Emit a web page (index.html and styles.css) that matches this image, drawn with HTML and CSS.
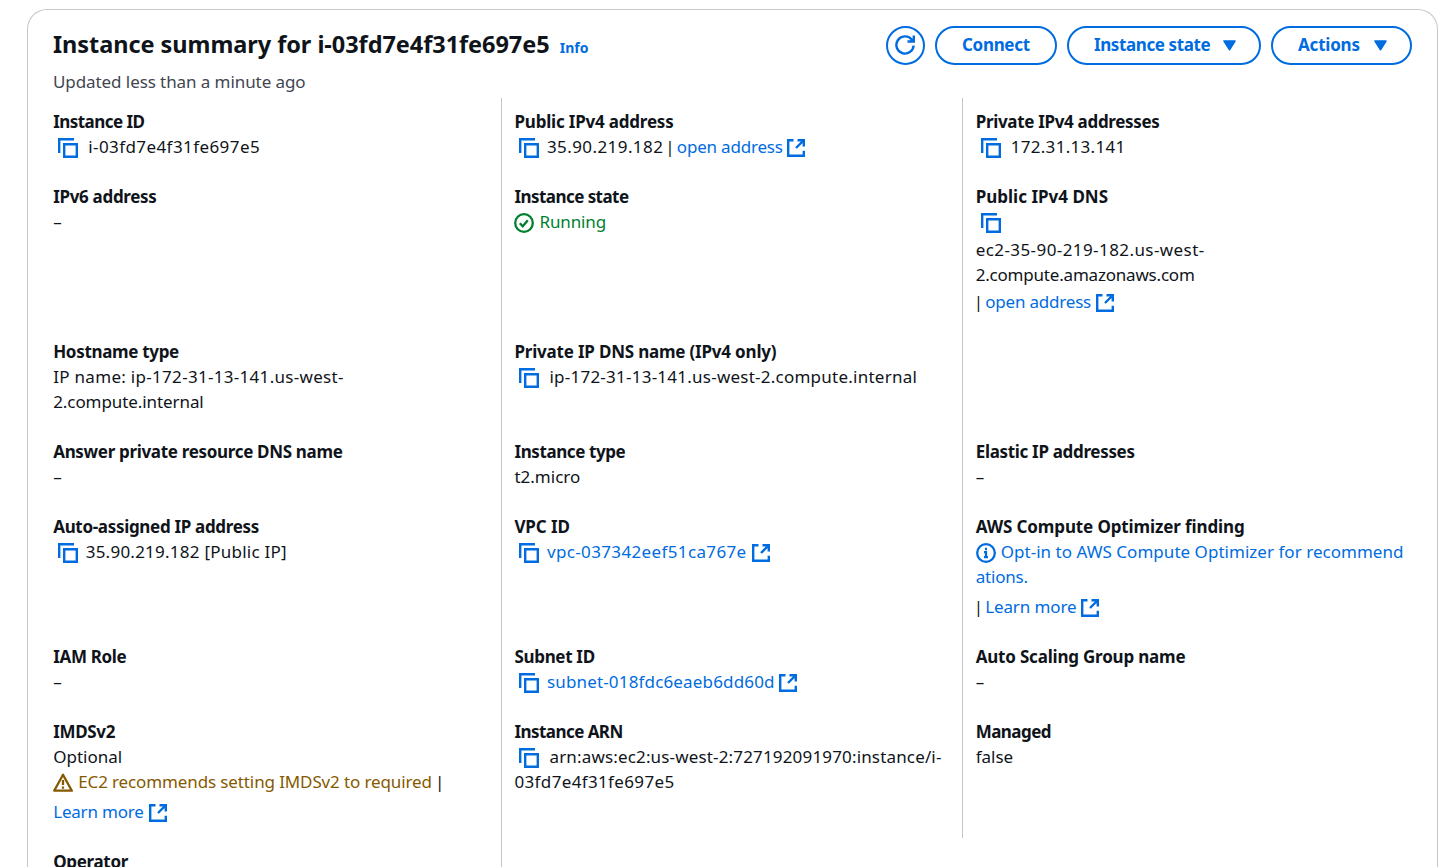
FILE: index.html
```
<!DOCTYPE html>
<html lang="en">
<head>
<meta charset="utf-8">
<title>Instance summary</title>
<link rel="stylesheet" href="styles.css">
</head>
<body>
<svg class="defs" width="0" height="0" aria-hidden="true">
  <symbol id="copy" viewBox="0 0 20 20"><path d="M1.200 15V1.200h14.800" /><path d="M6.200 6.200h12.600v12.600H6.200z"/></symbol>
  <symbol id="ext" viewBox="1 1 18 18"><path d="M7.500 2.200H2.200v15.600h15.600v-5M11.500 2.200h6.300v6.300M17.500 2.500 10 10"/></symbol>
  <symbol id="ok" viewBox="0 0 20 20"><circle cx="10" cy="10" r="8.8"/><path d="m5.800 10.200 3 3 5-6"/></symbol>
  <symbol id="info" viewBox="0 0 20 20"><circle cx="10" cy="10" r="8.8"/><path d="M8 9.200h2v5M8 14.200h4M9 6h2"/></symbol>
  <symbol id="warn" viewBox="0 0 20 20"><path d="M10 1.800 18.800 17.700H1.200z" stroke-linejoin="round"/><path d="M10 7v5M10 13.500v2.200"/></symbol>
  <symbol id="refresh" viewBox="0 0 20 20"><path d="M18.600 10.500a8.600 8.600 0 1 1-2.200-6.300L18.500 6.500M12.500 6.500h6.300V.5"/></symbol>
  <symbol id="caret" viewBox="0 0 13 11"><path d="M1 1h11L6.500 9.800z"/></symbol>
</svg>

<main class="card">
  <header class="header">
    <div>
      <h1 class="title">Instance summary for i-03fd7e4f31fe697e5 <a class="info-link">Info</a></h1>
      <p class="updated">Updated less than a minute ago</p>
    </div>
    <div class="actions">
      <button class="btn round" aria-label="Refresh"><svg><use href="#refresh"/></svg></button>
      <button class="btn connect m3">Connect</button>
      <button class="btn state"><span class="m4">Instance state</span><svg><use href="#caret"/></svg></button>
      <button class="btn menu"><span class="m2">Actions</span><svg><use href="#caret"/></svg></button>
    </div>
  </header>

  <div class="grid">
    <section class="cell"><h2 class="m5">Instance ID</h2>
      <div class="line"><svg class="copy"><use href="#copy"/></svg><span class="p4 wide">i-03fd7e4f31fe697e5</span></div></section>
    <section class="cell"><h2 class="m2">Public IPv4 address</h2>
      <div class="line"><svg class="copy"><use href="#copy"/></svg><span class="p4">35.90.219.182</span><span class="bar mid">|</span><a class="m2">open address</a><svg class="ext near"><use href="#ext"/></svg></div></section>
    <section class="cell"><h2 class="m3">Private IPv4 addresses</h2>
      <div class="line"><svg class="copy"><use href="#copy"/></svg><span class="p3 wide">172.31.13.141</span></div></section>

    <section class="cell"><h2 class="m3">IPv6 address</h2><div class="line dash">–</div></section>
    <section class="cell"><h2 class="m5">Instance state</h2>
      <div class="line ok"><svg class="status"><use href="#ok"/></svg><span class="m1">Running</span></div></section>
    <section class="cell"><h2>Public IPv4 DNS</h2>
      <div class="line tall"><svg class="copy"><use href="#copy"/></svg></div>
      <div class="line p4">ec2-35-90-219-182.us-west-</div>
      <div class="line m2">2.compute.amazonaws.com</div>
      <div class="line drop"><span class="bar">|</span><a class="m2">open address</a><svg class="ext"><use href="#ext"/></svg></div></section>

    <section class="cell"><h2 class="m3">Hostname type</h2>
      <div class="line p3">IP name: ip-172-31-13-141.us-west-</div><div class="line m05">2.compute.internal</div></section>
    <section class="cell"><h2 class="m2">Private IP DNS name (IPv4 only)</h2>
      <div class="line"><svg class="copy"><use href="#copy"/></svg><span class="p2 wide">ip-172-31-13-141.us-west-2.compute.internal</span></div></section>
    <section class="cell"></section>

    <section class="cell"><h2 class="m3">Answer private resource DNS name</h2><div class="line dash">–</div></section>
    <section class="cell"><h2 class="m4">Instance type</h2><div class="line">t2.micro</div></section>
    <section class="cell"><h2 class="m3">Elastic IP addresses</h2><div class="line dash">–</div></section>

    <section class="cell"><h2 class="m3">Auto-assigned IP address</h2>
      <div class="line"><svg class="copy"><use href="#copy"/></svg><span class="p2">35.90.219.182 [Public IP]</span></div></section>
    <section class="cell"><h2 class="m1">VPC ID</h2>
      <div class="line"><svg class="copy"><use href="#copy"/></svg><a class="p35">vpc-037342eef51ca767e</a><svg class="ext"><use href="#ext"/></svg></div></section>
    <section class="cell"><h2 class="m1">AWS Compute Optimizer finding</h2>
      <div class="line link opt"><svg class="status"><use href="#info"/></svg>Opt-in to AWS Compute Optimizer for recommend</div>
      <div class="line link m2">ations.</div>
      <div class="line drop-lg"><span class="bar">|</span><a class="m1">Learn more</a><svg class="ext"><use href="#ext"/></svg></div></section>

    <section class="cell"><h2 class="m3">IAM Role</h2><div class="line dash">–</div></section>
    <section class="cell"><h2 class="m3">Subnet ID</h2>
      <div class="line"><svg class="copy"><use href="#copy"/></svg><a class="p15">subnet-018fdc6eaeb6dd60d</a><svg class="ext near"><use href="#ext"/></svg></div></section>
    <section class="cell"><h2 class="m2">Auto Scaling Group name</h2><div class="line dash">–</div></section>

    <section class="cell"><h2 class="m3">IMDSv2</h2>
      <div class="line">Optional</div>
      <div class="line warn"><svg class="status"><use href="#warn"/></svg><span class="m1">EC2 recommends setting IMDSv2 to required</span><span class="bar end">|</span></div>
      <div class="line drop-lg"><a class="m2">Learn more</a><svg class="ext"><use href="#ext"/></svg></div></section>
    <section class="cell"><h2 class="m5">Instance ARN</h2>
      <div class="line"><svg class="copy"><use href="#copy"/></svg><span class="p15 wide">arn:aws:ec2:us-west-2:727192091970:instance/i-</span></div>
      <div class="line p35">03fd7e4f31fe697e5</div></section>
    <section class="cell"><h2 class="m5">Managed</h2><div class="line">false</div></section>

    <section class="cell"><h2 class="m3">Operator</h2></section>
    <section class="cell"></section>
  </div>
</main>
</body>
</html>
```
FILE: styles.css
```
* { box-sizing: border-box; }
html, body { height: 100%; }
body {
  display: flow-root;
  margin: 0;
  overflow: hidden;
  background: #fff;
  color: #0f141a;
  font: 17px/25px "Noto Sans", "Open Sans", sans-serif;
}
.defs { display: block; height: 0; }
svg { fill: none; stroke: currentColor; stroke-width: 2; flex: none; }
h1, h2, p { margin: 0; }

.card {
  width: 1411px;
  height: 858px;
  margin: 9px 0 0 27px;
  border: 1px solid #c6c6cd;
  border-bottom: 0;
  border-radius: 20px 20px 0 0;
  overflow: hidden;
}
.header {
  display: flex;
  justify-content: space-between;
  height: 88px;
  padding: 16px 25px 0;
}
.title {
  margin-top: -1px;
  font-size: 23.5px;
  line-height: 38px;
  letter-spacing: -0.05px;
  white-space: nowrap;
}
.info-link { margin-left: 4px; font-size: 14px; letter-spacing: 0; color: #006ce0; }
.updated { margin-top: 2px; color: #424650; letter-spacing: -0.08px; }

.actions { display: flex; gap: 10px; }
.btn {
  display: flex;
  align-items: center;
  justify-content: space-between;
  height: 39px;
  padding: 0 25px 2px;
  border: 2px solid #006ce0;
  border-radius: 20px;
  background: #fff;
  color: #006ce0;
  font: 700 17px/25px "Noto Sans", "Open Sans", sans-serif;
  white-space: nowrap;
}
.btn svg { width: 13px; height: 11px; margin-top: 1px; fill: currentColor; stroke-width: 1.5; stroke-linejoin: round; }
.btn.round { width: 39px; padding: 0 1px 1px 0; justify-content: center; }
.btn.round svg { width: 20px; height: 20px; margin: 0; fill: none; stroke-width: 2.4; stroke-linejoin: miter; }
.connect { width: 122px; }
.state { width: 194px; }
.menu { width: 141px; }
.btn.state, .btn.menu { padding-right: 23.5px; }

.grid {
  display: grid;
  grid-template-columns: 461.25px 461.25px 461.5px;
  grid-template-rows: 75px 155px 100px 75px 130px 75px 130px 29px;
  margin-left: 11.7px;
}
.cell {
  padding: 11px 0 0 12.5px;
  border-left: 1px solid #c6c6cd;
  white-space: nowrap;
}
.cell:nth-child(3n + 1) { border-color: transparent; }
h2 { height: 25px; font-size: 17px; line-height: 25px; font-weight: 700; }
.line { display: flex; align-items: center; height: 25px; }
.dash { padding-bottom: 1px; }
.tall { height: 28px; padding-bottom: 2px; }
.drop { margin-top: 2px; }
.drop-lg { margin-top: 5px; }

a, .link { color: #006ce0; }
.ok { color: #00802f; }
.warn { color: #855900; }
.copy { width: 20px; height: 20px; margin: 2px 7.5px 0 5px; color: #006ce0; stroke-width: 2.4; }
.wide { margin-left: 2.5px; }
.ext { width: 18px; height: 18px; margin: 2px 0 0 5px; color: #006ce0; stroke-width: 2.4; }
.near { margin-left: 4px; }
.status { width: 20px; height: 20px; margin: 2px 5px 0 0; stroke-width: 2.3; }
.bar { width: 9.5px; color: #0f141a; text-indent: -2px; }
.mid { margin-left: 4px; }
.end { margin-left: 5px; }
.opt { letter-spacing: 0.03px; }

/* Letter-spacing steps */
.m05 { letter-spacing: -0.08px; }
.m1 { letter-spacing: -0.12px; }
.m2 { letter-spacing: -0.2px; }
.m3 { letter-spacing: -0.32px; }
.m4 { letter-spacing: -0.4px; }
.m5 { letter-spacing: -0.55px; }
.p15 { letter-spacing: 0.16px; }
.p2 { letter-spacing: 0.24px; }
.p3 { letter-spacing: 0.3px; }
.p35 { letter-spacing: 0.36px; }
.p4 { letter-spacing: 0.42px; }
```
